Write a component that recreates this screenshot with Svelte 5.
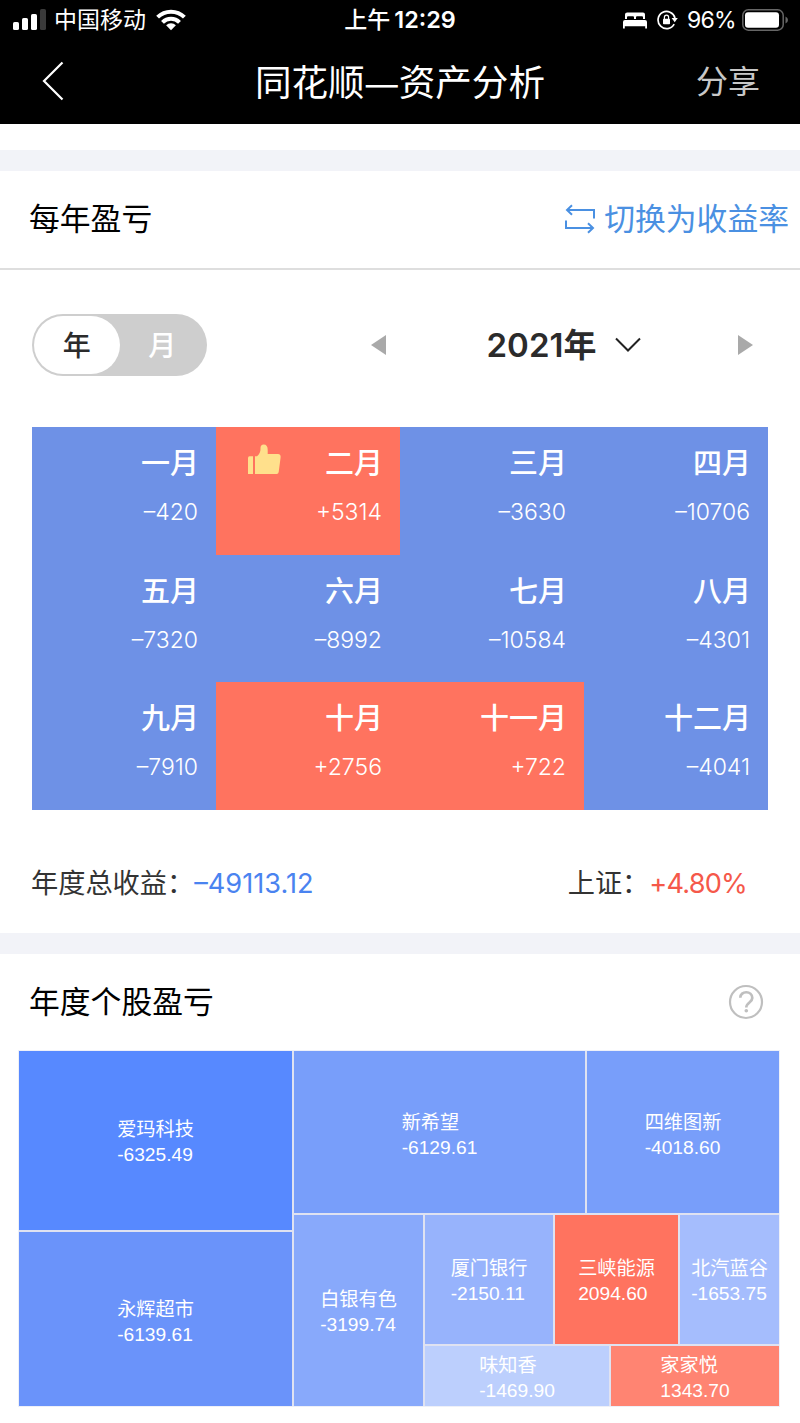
<script>
	const months = [
		{ name: "一月", profit: -420 },
		{ name: "二月", profit: 5314 },
		{ name: "三月", profit: -3630 },
		{ name: "四月", profit: -10706 },
		{ name: "五月", profit: -7320 },
		{ name: "六月", profit: -8992 },
		{ name: "七月", profit: -10584 },
		{ name: "八月", profit: -4301 },
		{ name: "九月", profit: -7910 },
		{ name: "十月", profit: 2756 },
		{ name: "十一月", profit: 722 },
		{ name: "十二月", profit: -4041 },
	];

	const stocks = [
		{ name: "爱玛科技", profit: -6325.49, area: "aima", color: "#5789ff" },
		{ name: "永辉超市", profit: -6139.61, area: "yonghui", color: "#6a93fa" },
		{ name: "新希望", profit: -6129.61, area: "xiwang", color: "#789efa" },
		{ name: "四维图新", profit: -4018.6, area: "siwei", color: "#789efa" },
		{ name: "白银有色", profit: -3199.74, area: "baiyin", color: "#88a9fb" },
		{ name: "厦门银行", profit: -2150.11, area: "xiamen", color: "#97b3fc" },
		{ name: "三峡能源", profit: 2094.6, area: "sanxia", color: "#ff735f" },
		{ name: "北汽蓝谷", profit: -1653.75, area: "beiqi", color: "#a5bdfd" },
		{ name: "味知香", profit: -1469.9, area: "weizhi", color: "#bccffd" },
		{ name: "家家悦", profit: 1343.7, area: "jiajia", color: "#ff8472" },
	];

	const best = Math.max(...months.map((m) => m.profit));
	const sign = (n) => (n < 0 ? "–" : "+") + Math.abs(n);

	let mode = $state("year");
	let year = $state(2021);
</script>

<main>
	<header>
		<div class="status">
			<div class="left">
				<svg class="signal" width="33" height="22" viewBox="0 0 33 22">
					<rect x="0" y="13" width="6" height="8" rx="1.6" fill="#fff" />
					<rect x="9" y="9" width="6" height="12" rx="1.6" fill="#fff" />
					<rect x="18" y="5" width="6" height="16" rx="1.6" fill="#fff" />
					<rect x="27" y="0" width="6" height="21" rx="1.6" fill="#3a3a3a" />
				</svg>
				<span class="carrier">中国移动</span>
				<svg class="wifi" width="30" height="22" viewBox="0 0 30 22">
					<g fill="none" stroke="#fff" stroke-width="4">
						<path d="M1.6 8.2a19 19 0 0 1 26.8 0" />
						<path d="M6.5 13.3a12 12 0 0 1 17 0" />
					</g>
					<path d="M15 21.3l-4.9-5a7 7 0 0 1 9.8 0z" fill="#fff" />
				</svg>
			</div>
			<div class="time">上午<span>12:29</span></div>
			<div class="right">
				<svg width="24" height="17" viewBox="0 0 24 17" fill="#fff">
					<path d="M2 7V2.6Q2 .5 4.2 .5H20q2 0 2 2.1V7h-2V5.2q0-1-1-1h-5q-1 0-1 1V7h-2V5.2q0-1-1-1H5q-1 0-1 1V7z" />
					<path d="M0 16.5V10q0-2 2-2h20q2 0 2 2v6.5h-1.8v-2.3H1.8v2.3z" />
				</svg>
				<svg class="lock" width="21" height="20" viewBox="0 0 21 20">
					<path d="M17.2 14.2A8.6 8.6 0 1 1 18 8" fill="none" stroke="#fff" stroke-width="1.7" />
					<path d="M14.6 8h6.2l-3.1 4.3z" fill="#fff" />
					<rect x="6" y="8.7" width="7" height="5.6" rx=".8" fill="#fff" />
					<path d="M7.4 9V7.2a2.1 2.1 0 0 1 4.2 0V9" fill="none" stroke="#fff" stroke-width="1.2" />
				</svg>
				<span class="percent">96%</span>
				<svg class="battery" width="47" height="22" viewBox="0 0 47 22">
					<rect x=".8" y=".8" width="40.4" height="20.4" rx="5.5" fill="none" stroke="#666" stroke-width="1.5" />
					<rect x="3" y="3.2" width="34" height="15.6" rx="3" fill="#fff" />
					<path d="M43.5 7.5q2.5 1 2.5 3.5t-2.5 3.5z" fill="#666" />
				</svg>
			</div>
		</div>
		<nav>
			<svg class="back" width="22" height="40" viewBox="0 0 22 40">
				<path d="M20.5 1.5L2 20l18.5 18.5" fill="none" stroke="#fff" stroke-width="2.2" />
			</svg>
			<h1>同花顺<span>—</span>资产分析</h1>
			<span class="share">分享</span>
		</nav>
	</header>

	<section class="yearly">
		<div class="heading">
			<h2>每年盈亏</h2>
			<div class="switch">
				<svg width="31" height="31" viewBox="0 0 31 31" fill="none" stroke="#4a90e2" stroke-width="2">
					<path d="M7 1.2L2 6l5 4.800M2 6h27v8.500" />
					<path d="M1 16.500V24h27M23 19.200l5 4.800-5 4.800" />
				</svg>
				<span>切换为收益率</span>
			</div>
		</div>

		<div class="controls">
			<div class="toggle">
				<button class:active={mode === "year"} onclick={() => (mode = "year")}>年</button>
				<button class:active={mode === "month"} onclick={() => (mode = "month")}>月</button>
			</div>
			<div class="picker">
				<button aria-label="上一年" onclick={() => (year -= 1)}>
					<svg width="15" height="20" viewBox="0 0 15 20"><path d="M15 0v20L0 10z" fill="#a9a9a9" /></svg>
				</button>
				<div class="current">
					<span>{year}年</span>
					<svg width="26" height="16" viewBox="0 0 26 16">
						<path d="M1 1.500l12 12 12-12" fill="none" stroke="#222" stroke-width="2" />
					</svg>
				</div>
				<button aria-label="下一年" onclick={() => (year += 1)}>
					<svg width="15" height="20" viewBox="0 0 15 20"><path d="M0 0v20l15-10z" fill="#a9a9a9" /></svg>
				</button>
			</div>
		</div>

		<div class="months">
			{#each months as month}
				<div class="month" class:up={month.profit > 0}>
					{#if month.profit === best}
						<svg class="thumb" width="33" height="31" viewBox="0 0 33 31" fill="#ffe08c">
							<path d="M1.500 12.300H5V30H0V14q0-1.700 1.500-1.700z" />
							<path d="M7 30V12.300h2q3.500-2.800 3.500-7V4q0-3.500 3.200-3.500 4 0 4 5.500V10H30q3 0 2.600 3.500L30.700 28q-.3 2-2 2z" />
						</svg>
					{/if}
					<h3>{month.name}</h3>
					<p>{sign(month.profit)}</p>
				</div>
			{/each}
		</div>

		<div class="totals">
			<div>年度总收益：<span class="loss">–49113.12</span></div>
			<div>上证：<span class="gain">+4.80%</span></div>
		</div>
	</section>

	<section class="stocks">
		<div class="heading">
			<h2>年度个股盈亏</h2>
			<svg width="36" height="36" viewBox="0 0 36 36" fill="none" stroke="#bfbfbf">
				<circle cx="18" cy="18" r="16" stroke-width="2.2" />
				<path d="M12.300 13.800c0-7.500 12-7.300 12 .2 0 4.500-6 4.500-6 9.500" stroke-width="2.7" />
				<circle cx="18.300" cy="26.700" r="1.8" fill="#bfbfbf" stroke="none" />
			</svg>
		</div>
		<div class="treemap">
			{#each stocks as stock}
				<div class="stock {stock.area}" style="background: {stock.color}">
					<div>
						<p>{stock.name}</p>
						<p>{stock.profit.toFixed(2)}</p>
					</div>
				</div>
			{/each}
		</div>
	</section>
</main>

<style>
	:global(body) {
		background: #fff;
	}
	main {
		width: 800px;
		height: 1423px;
		overflow: hidden;
		font-family: Inter, "Noto Sans CJK SC", sans-serif;
		color: #000;
	}
	h1,
	h2,
	h3,
	p {
		margin: 0;
		font-weight: 400;
	}
	svg {
		display: block;
		flex: none;
	}
	button {
		border: none;
		background: none;
		padding: 0;
		font: inherit;
	}
	header {
		height: 124px;
		background: #000;
		color: #fff;
	}
	.status {
		display: grid;
		grid-template-columns: 1fr auto 1fr;
		height: 40px;
		padding: 0 11px 0 13px;
		font-size: 23px;
		line-height: 40px;
	}
	.left,
	.right {
		display: flex;
		align-items: center;
	}
	.right {
		justify-content: flex-end;
	}
	.carrier {
		margin: 0 10px 0 8px;
	}
	.time {
		margin-right: 2px;
		font-weight: 500;
	}
	.time span {
		margin-left: 4px;
		font-weight: 600;
		font-size: 23.4px;
	}
	.lock {
		margin: 0 9px 0 10px;
	}
	.percent {
		letter-spacing: -0.7px;
	}
	.battery {
		margin-left: 6px;
	}
	nav {
		display: grid;
		grid-template-columns: 1fr auto 1fr;
		align-items: center;
		height: 82px;
		padding: 0 40px 0 42px;
	}
	h1 {
		margin: 3px 2px 0 0;
		font-size: 36.6px;
		line-height: 50px;
	}
	h1 span {
		display: inline-block;
		width: 34px;
		font-size: 32px;
		line-height: 36px;
		text-align: center;
	}
	.share {
		justify-self: end;
		margin-top: -4px;
		font-size: 32px;
		color: #c8c8c8;
	}
	.yearly {
		margin-top: 26px;
		border-top: 21px solid #f2f3f8;
	}
	.heading {
		display: flex;
		align-items: center;
		justify-content: space-between;
	}
	.yearly .heading {
		height: 97px;
		padding: 0 11px 0 29px;
		border-bottom: 2px solid #dedede;
	}
	h2,
	.switch span {
		padding-bottom: 6px;
		font-size: 30.8px;
	}
	.switch {
		display: flex;
		align-items: center;
		gap: 8px;
		color: #4a90e2;
	}
	.controls {
		display: flex;
		align-items: center;
		justify-content: space-between;
		padding: 44px 47px 0 32px;
	}
	.toggle {
		display: flex;
		box-sizing: border-box;
		width: 175px;
		height: 62px;
		padding: 2px;
		border-radius: 31px;
		background: #cecece;
		font-size: 28px;
		font-weight: 500;
	}
	.toggle button {
		flex: 1;
		padding-bottom: 2px;
		border-radius: 29px;
		color: #fff;
	}
	.toggle button.active {
		background: #fff;
		color: #2b2b2b;
	}
	.picker {
		display: flex;
		align-items: center;
		justify-content: space-between;
		width: 382px;
	}
	.current {
		display: flex;
		align-items: center;
		gap: 19px;
		margin-left: 4px;
		font-size: 33px;
		line-height: 50px;
		font-weight: 600;
		color: #2b2b2b;
	}
	.months {
		display: grid;
		grid-template-columns: repeat(4, 184px);
		grid-auto-rows: 127.5px;
		margin: 51px 32px 0;
		background: #6e91e6;
	}
	.month {
		position: relative;
		padding: 17px 18px 0 0;
		text-align: right;
		color: #fff;
	}
	.month.up {
		background: #ff735f;
	}
	.month h3 {
		margin-right: -1px;
		font-size: 29px;
		line-height: 40px;
		font-weight: 500;
	}
	.month p {
		margin-top: 12px;
		font-size: 23px;
		line-height: 32px;
		font-weight: 300;
	}
	.thumb {
		position: absolute;
		left: 32px;
		top: 17px;
	}
	.totals {
		display: flex;
		justify-content: space-between;
		padding: 54.5px 53px 29px 31px;
		font-size: 27.2px;
		line-height: 40px;
		color: #333;
	}
	.loss {
		color: #4a83f0;
	}
	.gain {
		color: #f5584a;
		letter-spacing: -0.8px;
	}
	.stocks {
		border-top: 21px solid #f2f3f8;
	}
	.stocks .heading {
		height: 96px;
		padding: 0 36px 0 29px;
	}
	.treemap {
		display: grid;
		grid-template-columns: 273px 129px 128px 30px 22px 67px 99px;
		grid-template-rows: 162px 15px 112px 60px;
		grid-template-areas:
			"aima xiwang xiwang xiwang siwei siwei siwei"
			"aima baiyin xiamen sanxia sanxia sanxia beiqi"
			"yonghui baiyin xiamen sanxia sanxia sanxia beiqi"
			"yonghui baiyin weizhi weizhi weizhi jiajia jiajia";
		gap: 2px;
		width: 760px;
		margin: 1px 19px 0;
		background: #dfe2f1;
		box-shadow: 0 0 0 1px #eef0f8;
	}
	.stock {
		display: flex;
		align-items: center;
		justify-content: center;
		box-sizing: border-box;
		padding-top: 3px;
		font-family: "Liberation Sans", "Noto Sans CJK SC", sans-serif;
		font-size: 19.2px;
		line-height: 25px;
		white-space: nowrap;
		color: #fff;
	}
	.aima {
		grid-area: aima;
	}
	.yonghui {
		grid-area: yonghui;
		padding-top: 5px;
	}
	.xiwang {
		grid-area: xiwang;
		padding-top: 5px;
	}
	.siwei {
		grid-area: siwei;
		padding-top: 5px;
	}
	.baiyin {
		grid-area: baiyin;
	}
	.xiamen {
		grid-area: xiamen;
	}
	.sanxia {
		grid-area: sanxia;
	}
	.beiqi {
		grid-area: beiqi;
	}
	.weizhi {
		grid-area: weizhi;
	}
	.jiajia {
		grid-area: jiajia;
	}
</style>
